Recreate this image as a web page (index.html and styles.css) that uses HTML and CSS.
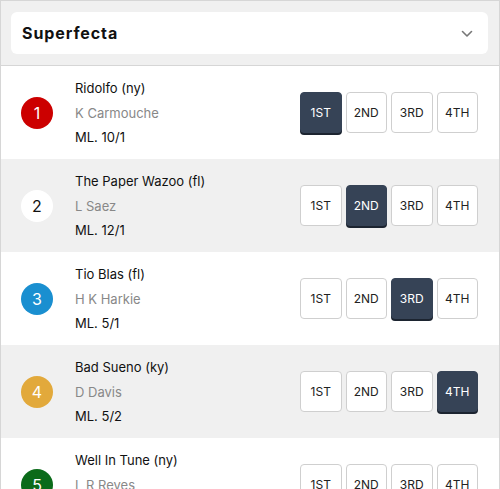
FILE: index.html
```html
<!DOCTYPE html>
<html>
<head>
<meta charset="utf-8">
<link rel="stylesheet" href="styles.css">
</head>
<body>
<div class="panel">
  <div class="header">
    <div class="card">
      <span class="title">Superfecta</span>
      <svg class="chev" width="12" height="8" viewBox="0 0 12 8"><path d="M1.5 1.5 L6 6 L10.5 1.5" fill="none" stroke="#777" stroke-width="1.6" stroke-linecap="round" stroke-linejoin="round"/></svg>
    </div>
  </div>
  <div class="row">
    <div class="num n1">1</div>
    <div class="info"><div class="name">Ridolfo (ny)</div><div class="jockey">K Carmouche</div><div class="ml">ML. 10/1</div></div>
    <div class="btns"><span class="btn sel">1ST</span><span class="btn">2ND</span><span class="btn">3RD</span><span class="btn">4TH</span></div>
  </div>
  <div class="row alt">
    <div class="num n2">2</div>
    <div class="info"><div class="name">The Paper Wazoo (fl)</div><div class="jockey">L Saez</div><div class="ml">ML. 12/1</div></div>
    <div class="btns"><span class="btn">1ST</span><span class="btn sel">2ND</span><span class="btn">3RD</span><span class="btn">4TH</span></div>
  </div>
  <div class="row">
    <div class="num n3">3</div>
    <div class="info"><div class="name">Tio Blas (fl)</div><div class="jockey">H K Harkie</div><div class="ml">ML. 5/1</div></div>
    <div class="btns"><span class="btn">1ST</span><span class="btn">2ND</span><span class="btn sel">3RD</span><span class="btn">4TH</span></div>
  </div>
  <div class="row alt">
    <div class="num n4">4</div>
    <div class="info"><div class="name">Bad Sueno (ky)</div><div class="jockey">D Davis</div><div class="ml">ML. 5/2</div></div>
    <div class="btns"><span class="btn">1ST</span><span class="btn">2ND</span><span class="btn">3RD</span><span class="btn sel">4TH</span></div>
  </div>
  <div class="row">
    <div class="num n5">5</div>
    <div class="info"><div class="name">Well In Tune (ny)</div><div class="jockey">L R Reyes</div><div class="ml">ML. 8/1</div></div>
    <div class="btns"><span class="btn">1ST</span><span class="btn">2ND</span><span class="btn">3RD</span><span class="btn">4TH</span></div>
  </div>
</div>
</body>
</html>
```
FILE: styles.css
```css
html, body {
  margin: 0;
  padding: 0;
  background: #fff;
  overflow: hidden;
}
body {
  font-family: Inter, "Open Sans", sans-serif;
  color: #111;
}
.panel {
  width: 500px;
  box-sizing: border-box;
  border: 1px solid #d6d6d6;
  border-bottom: none;
}
.header {
  background: #f0f0f0;
  padding: 11px 11px 11px 10px;
  border-bottom: 1px solid #d6d6d6;
}
.card {
  background: #fff;
  border-radius: 6px;
  height: 42px;
  display: flex;
  align-items: center;
  justify-content: space-between;
  padding: 0 15px 0 11px;
}
.title {
  font-weight: 700;
  font-size: 16px;
  letter-spacing: 0.9px;
  color: #111;
}
.chev {
  display: block;
  margin-top: 1px;
}
.row {
  height: 93px;
  display: flex;
  align-items: center;
  padding: 0 21px 0 20px;
  background: #fff;
}
.row.alt {
  background: #f0f0f0;
}
.num {
  width: 32px;
  height: 32px;
  border-radius: 50%;
  display: flex;
  align-items: center;
  justify-content: center;
  font-size: 16px;
  color: #fff;
  flex: none;
}
.n1 { background: #cc0000; }
.n2 { background: #fff; color: #111; }
.n3 { background: #1a8fd0; }
.n4 { background: #e2a93b; }
.n5 { background: #0b6b1a; }
.info {
  flex: 1;
  margin-left: 22px;
  font-size: 13px;
  line-height: 24.5px;
  margin-top: 1px;
}
.jockey { color: #888; }
.btns {
  display: flex;
  gap: 4px;
}
.btn {
  width: 41.5px;
  height: 41px;
  box-sizing: border-box;
  border: 1px solid #cfcfcf;
  border-radius: 4px;
  background: #fff;
  display: flex;
  align-items: center;
  justify-content: center;
  font-size: 12px;
  color: #222;
}
.btn.sel {
  background: #364356;
  border-color: #364356;
  color: #fff;
  box-shadow: 0 2px 0 #1c2430;
}
```
